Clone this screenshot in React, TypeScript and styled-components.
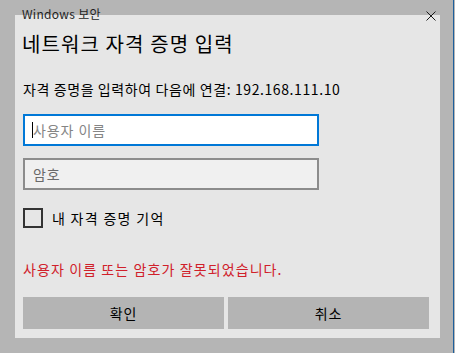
import styled, { createGlobalStyle } from "styled-components";

const GlobalStyle = createGlobalStyle`
  html, body {
    margin: 0;
    padding: 0;
    background: #b5b5b5;
  }
  body {
    font-family: "Noto Sans CJK KR", "Noto Sans", sans-serif;
  }
`;

const Page = styled.div`
  display: flex;
  width: 455px;
  height: 353px;
  background: #b5b5b5;
  overflow: hidden;
`;

const Stage = styled.div`
  width: 453px;
  padding: 15px 0 0 15px;
  box-sizing: border-box;
`;

const EdgeLine = styled.div`
  width: 1px;
  background: #1d5f9c;
`;

const Dialog = styled.div`
  width: 425px;
  height: 323px;
  background: #e6e6e6;
  display: flex;
  flex-direction: column;
  padding: 0 11px 0 8px;
  box-sizing: border-box;
`;

const TitleBar = styled.div`
  display: flex;
  align-items: center;
  justify-content: space-between;
  height: 16px;
  margin: -9px -7px 0 -1px;
`;

const TitleText = styled.span`
  font-size: 12px;
  line-height: 16px;
  letter-spacing: 0.3px;
  color: #1f1f1f;
`;

const CloseIcon = styled.svg`
  width: 10px;
  height: 10px;
  margin-top: 4px;
  display: block;
`;

const Heading = styled.div`
  margin-top: 8px;
  margin-left: -1px;
  font-size: 20px;
  line-height: 28px;
  letter-spacing: 1.1px;
  color: #000;
`;

const Prompt = styled.div`
  margin-top: 21px;
  font-size: 14px;
  line-height: 20px;
  letter-spacing: 0.6px;
  color: #000;
`;

const Field = styled.div<{ $focused?: boolean }>`
  display: flex;
  align-items: center;
  width: 296px;
  height: 32px;
  box-sizing: border-box;
  padding-left: 7px;
  border: 2px solid ${(p) => (p.$focused ? "#0078d7" : "#8c8c8c")};
  background: ${(p) => (p.$focused ? "#ffffff" : "#f0f0f0")};
  font-size: 14px;
  color: ${(p) => (p.$focused ? "#858585" : "#6a6a6a")};
  letter-spacing: 0.9px;
`;

const UserField = styled(Field)`
  margin-top: 15px;
`;

const PasswordField = styled(Field)`
  margin-top: 12px;
  padding-left: 8px;
`;

const Caret = styled.span`
  display: block;
  width: 1px;
  height: 16px;
  background: #000;
`;

const CheckRow = styled.label`
  display: flex;
  align-items: center;
  gap: 9px;
  margin-top: 18px;
  height: 20px;
`;

const CheckBox = styled.span`
  width: 20px;
  height: 20px;
  box-sizing: border-box;
  border: 2px solid #333;
`;

const CheckLabel = styled.span`
  font-size: 14px;
  letter-spacing: 1.3px;
  color: #000;
`;

const ErrorText = styled.div`
  margin-top: 31px;
  font-size: 14px;
  line-height: 20px;
  letter-spacing: 1.1px;
  color: #d0202a;
`;

const ButtonRow = styled.div`
  display: grid;
  grid-template-columns: 1fr 1fr;
  gap: 4px;
  margin-top: 18px;
`;

const Button = styled.button`
  height: 32px;
  border: none;
  background: #b4b4b4;
  font-family: inherit;
  font-size: 14px;
  letter-spacing: 0.8px;
  color: #000;
  padding: 0;
`;

export default function App() {
  return (
    <>
      <GlobalStyle />
      <Page>
        <Stage>
          <Dialog>
            <TitleBar>
              <TitleText>Windows 보안</TitleText>
              <CloseIcon viewBox="0 0 10 10">
                <path d="M0.5 0.5 L9.5 9.5 M9.5 0.5 L0.5 9.5" stroke="#1a1a1a" strokeWidth="1" />
              </CloseIcon>
            </TitleBar>
            <Heading>네트워크 자격 증명 입력</Heading>
            <Prompt>자격 증명을 입력하여 다음에 연결: 192.168.111.10</Prompt>
            <UserField $focused>
              <Caret />
              사용자 이름
            </UserField>
            <PasswordField>암호</PasswordField>
            <CheckRow>
              <CheckBox />
              <CheckLabel>내 자격 증명 기억</CheckLabel>
            </CheckRow>
            <ErrorText>사용자 이름 또는 암호가 잘못되었습니다.</ErrorText>
            <ButtonRow>
              <Button>확인</Button>
              <Button>취소</Button>
            </ButtonRow>
          </Dialog>
        </Stage>
        <EdgeLine />
      </Page>
    </>
  );
}
